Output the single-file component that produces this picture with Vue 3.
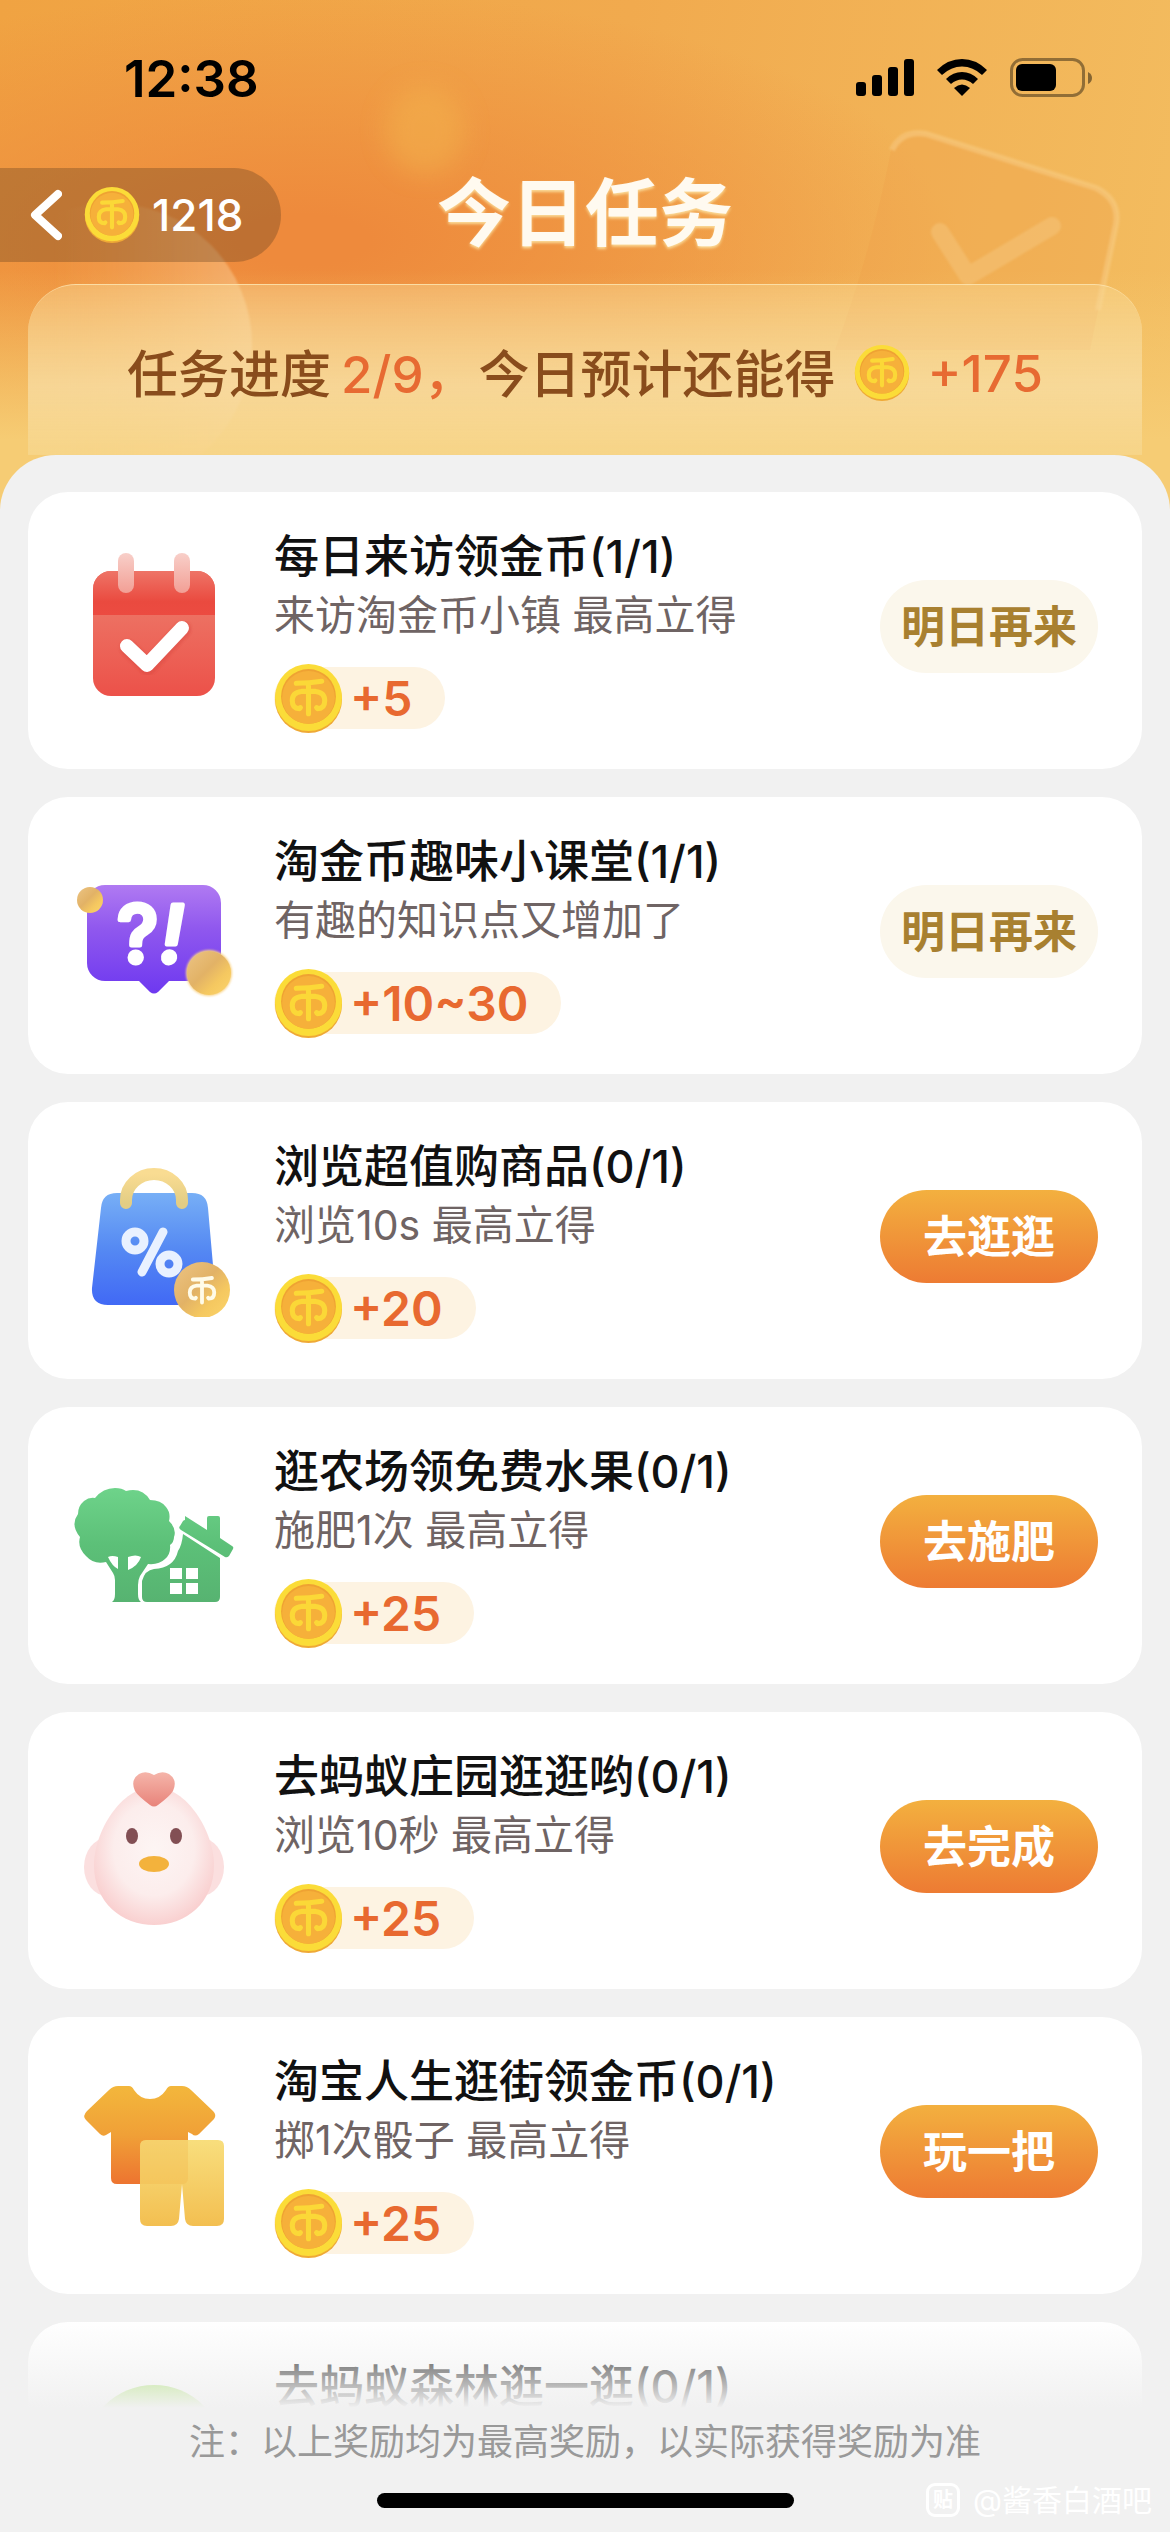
<script setup>
import { ref } from 'vue'

const balance = ref(1218)
const done = ref(2)
const total = ref(9)
const remain = ref(175)

const tasks = ref([
  { icon: 'calendar', title: '每日来访领金币(1/1)', desc: '来访淘金币小镇 最高立得', reward: '+5', action: '明日再来', finished: true },
  { icon: 'quiz', title: '淘金币趣味小课堂(1/1)', desc: '有趣的知识点又增加了', reward: '+10~30', action: '明日再来', finished: true },
  { icon: 'bag', title: '浏览超值购商品(0/1)', desc: '浏览10s 最高立得', reward: '+20', action: '去逛逛' },
  { icon: 'farm', title: '逛农场领免费水果(0/1)', desc: '施肥1次 最高立得', reward: '+25', action: '去施肥' },
  { icon: 'chick', title: '去蚂蚁庄园逛逛哟(0/1)', desc: '浏览10秒 最高立得', reward: '+25', action: '去完成' },
  { icon: 'clothes', title: '淘宝人生逛街领金币(0/1)', desc: '掷1次骰子 最高立得', reward: '+25', action: '玩一把' },
  { icon: 'forest', title: '去蚂蚁森林逛一逛(0/1)' }
])
</script>

<template>
  <div class="page">
    <!-- shared shapes and gradients -->
    <svg class="defs" aria-hidden="true">
      <defs>
        <symbol id="emblem" viewBox="0 0 68 68">
          <g fill="none" stroke-width="5" stroke-linecap="round" stroke-linejoin="round">
            <path d="M22 19q13 0 25-2M34 19v30" />
            <path d="M34 27h-7q-9 1-9 9 0 8 7 8l1-1M34 27h7q9 1 9 9 0 8-7 8l-1-1" />
          </g>
        </symbol>
        <symbol id="coin" viewBox="0 0 68 68">
          <circle cx="34" cy="35" r="33" fill="#efa936" />
          <circle cx="34" cy="33" r="33" fill="#fbdc38" />
          <circle cx="34" cy="32" r="27" fill="#efa233" />
          <circle cx="34" cy="33" r="26" fill="#f6b03a" />
          <use href="#emblem" stroke="#fbd837" width="68" height="68" />
        </symbol>
        <linearGradient id="redTop" x1="0" y1="0" x2="0" y2="1">
          <stop offset="0" stop-color="#ee7467" />
          <stop offset="0.700" stop-color="#ea4a3f" />
          <stop offset="1" stop-color="#ec4b41" />
        </linearGradient>
        <linearGradient id="redBody" x1="0" y1="0" x2="0" y2="1">
          <stop offset="0.300" stop-color="#ed7364" />
          <stop offset="1" stop-color="#ec5149" />
        </linearGradient>
        <linearGradient id="ring" x1="0" y1="0" x2="0" y2="1">
          <stop offset="0" stop-color="#f8cfc9" />
          <stop offset="1" stop-color="#f29f95" />
        </linearGradient>
        <linearGradient id="purple" x1="0" y1="0" x2="0" y2="1">
          <stop offset="0" stop-color="#b07af2" />
          <stop offset="0.400" stop-color="#9058ee" />
          <stop offset="1" stop-color="#6e38f0" />
        </linearGradient>
        <linearGradient id="amber" x1="0" y1="0" x2="1" y2="1">
          <stop offset="0" stop-color="#ecc484" />
          <stop offset="0.450" stop-color="#e2b266" />
          <stop offset="0.700" stop-color="#f5c860" />
          <stop offset="1" stop-color="#fbd46c" />
        </linearGradient>
        <linearGradient id="blue" x1="0" y1="0" x2="0" y2="1">
          <stop offset="0" stop-color="#77aff6" />
          <stop offset="0.500" stop-color="#5589f3" />
          <stop offset="1" stop-color="#4169f5" />
        </linearGradient>
        <linearGradient id="handle" x1="0" y1="0" x2="0" y2="1">
          <stop offset="0" stop-color="#f9dc92" />
          <stop offset="1" stop-color="#e3cd84" />
        </linearGradient>
        <linearGradient id="green" x1="0" y1="26" x2="0" y2="140" gradientUnits="userSpaceOnUse">
          <stop offset="0" stop-color="#6ed38a" />
          <stop offset="0.500" stop-color="#5cc078" />
          <stop offset="1" stop-color="#57b371" />
        </linearGradient>
        <radialGradient id="pink" cx="0.500" cy="0.450" r="0.560">
          <stop offset="0" stop-color="#fdf5f4" />
          <stop offset="0.600" stop-color="#fcedec" />
          <stop offset="1" stop-color="#f9cfcf" />
        </radialGradient>
        <linearGradient id="heart" x1="0" y1="0" x2="0" y2="1">
          <stop offset="0" stop-color="#f5b5aa" />
          <stop offset="1" stop-color="#e8837a" />
        </linearGradient>
        <linearGradient id="shirt" x1="0" y1="0" x2="0" y2="1">
          <stop offset="0" stop-color="#f3b73c" />
          <stop offset="0.500" stop-color="#f0a037" />
          <stop offset="1" stop-color="#ed7430" />
        </linearGradient>
        <linearGradient id="shorts" x1="0" y1="0" x2="0" y2="1">
          <stop offset="0" stop-color="#f8de7d" />
          <stop offset="1" stop-color="#f3bf51" />
        </linearGradient>
        <linearGradient id="disc" x1="0" y1="0" x2="1" y2="0">
          <stop offset="0.300" stop-color="#f8c878" stop-opacity="0" />
          <stop offset="1" stop-color="#fbd3a0" stop-opacity="0.500" />
        </linearGradient>
        <linearGradient id="leaf" x1="0" y1="0" x2="0" y2="1">
          <stop offset="0" stop-color="#8fdc3c" />
          <stop offset="1" stop-color="#c6ec6a" />
        </linearGradient>
        <filter id="soft" x="-50%" y="-50%" width="200%" height="200%">
          <feGaussianBlur stdDeviation="12" />
        </filter>
        <filter id="glow" x="-20%" y="-20%" width="140%" height="140%">
          <feGaussianBlur stdDeviation="1" />
        </filter>
      </defs>
    </svg>

    <svg class="art" viewBox="0 0 1170 455" aria-hidden="true">
      <ellipse cx="425" cy="130" rx="40" ry="44" fill="#f3b44e" opacity="0.500" filter="url(#soft)" />
      <circle cx="110" cy="345" r="142" fill="url(#disc)" filter="url(#glow)" />
      <path d="M892 146Q902 128 926 134L1096 188Q1120 200 1116 224L1090 350H835Q872 250 892 146Z" fill="#f0a04a" fill-opacity="0.300" />
      <path d="M892 150Q902 130 926 134L1096 188Q1120 200 1116 224L1098 310" fill="none" stroke="#f9cf8a" stroke-opacity="0.500" stroke-width="6" filter="url(#glow)" />
      <path d="M940 232l28 44 84-50" fill="none" stroke="#f6c67c" stroke-opacity="0.500" stroke-width="18" stroke-linecap="round" stroke-linejoin="round" filter="url(#glow)" />
    </svg>

    <header class="header">
      <div class="status">
        <span class="time">12:38</span>
        <div class="signals">
          <svg width="58" height="38" viewBox="0 0 58 38" aria-label="信号">
            <rect x="0" y="23" width="10" height="14" rx="3" />
            <rect x="16" y="16" width="10" height="21" rx="3" />
            <rect x="32" y="8" width="10" height="29" rx="3" />
            <rect x="48" y="0" width="10" height="37" rx="3" />
          </svg>
          <svg width="50" height="38" viewBox="0 0 50 38" aria-label="无线网络">
            <path d="M0 11Q11 0 25 0T50 11L45 16Q36 7.500 25 7.500T5 16Z" />
            <path d="M9 20Q16 13 25 13T41 20L36 25Q31 20.500 25 20.500T14 25Z" />
            <path d="M17 29Q21 25.500 25 25.500T33 29L25 37Z" />
          </svg>
          <svg width="82" height="40" viewBox="0 0 82 40" aria-label="电量">
            <rect x="1.500" y="1.500" width="72" height="36" rx="11" fill="none" stroke="#000" stroke-opacity="0.400" stroke-width="3" />
            <rect x="6" y="6" width="40" height="27" rx="6" />
            <path d="M78 14q4 2 4 6t-4 6z" opacity="0.450" />
          </svg>
        </div>
      </div>

      <nav class="nav">
        <button class="back" type="button" aria-label="返回">
          <svg class="arrow" width="32" height="52" viewBox="0 0 32 52">
            <path d="M28 5L5 26l23 21" fill="none" stroke="#fff" stroke-width="8" stroke-linecap="round" stroke-linejoin="round" />
          </svg>
          <svg class="coin-md"><use href="#coin" /></svg>
          <span>{{ balance }}</span>
        </button>
        <h1 class="title">今日任务</h1>
      </nav>

      <div class="progress">
        <span>任务进度<em class="count">{{ done }}/{{ total }}，</em>今日预计还能得</span>
        <svg class="coin-md"><use href="#coin" /></svg>
        <em>+{{ remain }}</em>
      </div>
    </header>

    <main class="sheet">
      <ul class="list">
        <li v-for="task in tasks" :key="task.title" class="card">
          <svg class="icon" viewBox="0 0 160 160" aria-hidden="true">
            <g v-if="task.icon === 'calendar'">
              <rect x="19" y="24" width="122" height="125" rx="18" fill="url(#redBody)" />
              <path d="M19 68V42a18 18 0 0 1 18-18h86a18 18 0 0 1 18 18v26z" fill="url(#redTop)" />
              <rect x="44" y="6" width="16" height="40" rx="8" fill="url(#ring)" />
              <rect x="100" y="6" width="16" height="40" rx="8" fill="url(#ring)" />
              <path d="M54 101l20 19 35-38" fill="none" stroke="#d8453c" stroke-opacity="0.400" stroke-width="17" stroke-linecap="round" stroke-linejoin="round" filter="url(#glow)" />
              <path d="M53 99l20 19 35-37" fill="none" stroke="#fff" stroke-width="14" stroke-linecap="round" stroke-linejoin="round" />
            </g>
            <g v-else-if="task.icon === 'quiz'">
              <path d="M31 33h98a18 18 0 0 1 18 18v60a18 18 0 0 1-18 18H95l-11 11q-4 3-8 0l-11-11H31a18 18 0 0 1-18-18V51a18 18 0 0 1 18-18z" fill="url(#purple)" />
              <text class="quiz-mark" x="43" y="110">?<tspan class="slant" x="86">!</tspan></text>
              <circle cx="16" cy="48" r="13" fill="url(#amber)" />
              <circle cx="135" cy="121" r="23" fill="#f9d48a" filter="url(#glow)" />
              <circle cx="135" cy="121" r="22" fill="url(#amber)" />
            </g>
            <g v-else-if="task.icon === 'bag'">
              <path d="M43 36h75q15 0 16 15l7 80q1 17-16 17H34q-17 0-16-17l9-80q1-15 16-15z" fill="url(#blue)" />
              <path d="M52 46V43a28 26 0 0 1 56 0v3" fill="none" stroke="url(#handle)" stroke-width="12" stroke-linecap="round" />
              <g fill="none" stroke="#e9f1ff" stroke-width="9" stroke-linecap="round">
                <circle cx="61" cy="84" r="9" />
                <circle cx="95" cy="107" r="9" />
                <path d="M89 75L68 115" />
              </g>
              <circle cx="128" cy="133" r="28" fill="url(#amber)" />
              <use href="#emblem" x="102" y="108" width="52" height="52" stroke="#fffbe8" />
            </g>
            <g v-else-if="task.icon === 'farm'" fill="url(#green)">
              <path d="M38 140q3-2 3-8v-14q0-4-2-7l-7-11q-12 3-20-6-9-9-6-19-10-12-2-23 0-8 6-13 5-4 11-3 8-10 20-10 7 0 11 3 16-4 24 9 11 0 16 7 5 6 3 14 8 8 5 16 0 5-4 8 1 9-5 14-6 6-17 5l-8 12q-2 4-2 9v9q0 6 3 8z" />
              <path d="M34 95q4-2 10 0v12q-6-3-10-12zM54 95q8-3 13 0-3 9-13 13z" fill="#fff" />
              <path d="M109 72l37 24v39q0 5-5 5H73q-5 0-5-5v-16q3-11 12-12 20-1 24-18 4-6 5-17z" />
              <path d="M111 54l22 14V56q0-2 2-2h9q2 0 2 2v20l12 8q2 1 1 3l-4 7q-2 2-4 1l-44-27q-3-2-1-4l3-5q1-1 2-1z" />
              <path d="M96 106h12v11H96zM112 106h12v11h-12zM96 121h12v11H96zM112 121h12v11h-12z" fill="#fff" />
            </g>
            <g v-else-if="task.icon === 'chick'">
              <ellipse cx="33" cy="100" rx="23" ry="29" fill="#fbdfdf" />
              <ellipse cx="127" cy="100" rx="23" ry="29" fill="#fbdfdf" />
              <path d="M80 20c34 0 60 46 60 78 0 38-28 60-60 60s-60-22-60-60c0-32 26-78 60-78z" fill="url(#pink)" />
              <path d="M80 8q8-5 15-1 9 6 4 17-3 5-15 14-4 3-8 0-12-9-15-14-5-11 4-17 7-4 15 1z" fill="url(#heart)" />
              <ellipse cx="58" cy="69" rx="6" ry="8" fill="#824f54" />
              <ellipse cx="102" cy="69" rx="6" ry="8" fill="#824f54" />
              <ellipse cx="80" cy="97" rx="15" ry="8" fill="#f3b23c" />
            </g>
            <g v-else-if="task.icon === 'clothes'">
              <path d="M44 14h11q3 0 5 4 6 9 16 9t16-9q2-4 5-4h11q5 0 9 4l22 21q4 4 1 8l-15 15q-4 3-7 0l-4-2v46q0 6-6 6H43q-6 0-6-6V60l-5 3q-3 2-6-1L12 48q-4-4 1-9l22-21q4-4 9-4z" fill="url(#shirt)" />
              <path d="M72 68h72q6 0 6 6v73q0 7-7 7h-24q-7 0-8-7l-3-35-3 35q-1 7-8 7H73q-7 0-7-7V74q0-6 6-6z" fill="url(#shorts)" />
              <path d="M66 74q0-6 6-6h42v38q0 6-6 6H66z" fill="#f1b347" opacity="0.300" />
            </g>
            <g v-else>
              <circle cx="80" cy="78" r="70" fill="url(#leaf)" />
              <path d="M66 30q14 2 12 20-14-4-12-20z" fill="#fff" />
            </g>
          </svg>

          <div class="info">
            <h2>{{ task.title }}</h2>
            <p v-if="task.desc">{{ task.desc }}</p>
            <div v-if="task.reward" class="reward">
              <svg class="coin-lg"><use href="#coin" /></svg>
              <span>{{ task.reward }}</span>
            </div>
          </div>

          <button v-if="task.action" class="btn" :class="{ 'btn-done': task.finished }" type="button">{{ task.action }}</button>
        </li>
      </ul>
    </main>

    <footer class="footer">
      <p>注：以上奖励均为最高奖励，以实际获得奖励为准</p>
      <div class="home-bar"></div>
      <div class="watermark">
        <span class="mark">贴</span>
        <span>@酱香白酒吧</span>
      </div>
    </footer>
  </div>
</template>

<style>
html,
body {
  background: #f1f1f1;
}
</style>

<style scoped>
.page {
  position: relative;
  display: flex;
  flex-direction: column;
  height: 100vh;
  overflow: hidden;
  font-family: Inter, "Noto Sans CJK SC", sans-serif;
  background:
    linear-gradient(to bottom, rgba(246, 204, 116, 0) 270px, #f6cc74 440px) top / 100% 540px no-repeat,
    radial-gradient(ellipse 56% 250px at 26% 240px, #ee8a3c 10%, rgba(238, 142, 62, 0) 100%) top / 100% 540px no-repeat,
    linear-gradient(100deg, #f0a342 0%, #f1aa4e 50%, #f3bd60 100%) top / 100% 540px no-repeat,
    #f1f1f1;
}

.defs {
  position: absolute;
  width: 0;
  height: 0;
}

.art {
  position: absolute;
  top: 0;
  left: 0;
  width: 100%;
}

.header {
  position: relative;
  flex: none;
}

.status {
  display: flex;
  justify-content: space-between;
  align-items: center;
  height: 60px;
  padding: 48px 78px 60px 124px;
}

.time {
  font-size: 51px;
  font-weight: 600;
}

.signals {
  display: flex;
  align-items: center;
  gap: 23px;
}

.nav {
  display: grid;
  grid-template-columns: 1fr auto 1fr;
  align-items: center;
  height: 94px;
}

.back {
  justify-self: start;
  display: flex;
  align-items: center;
  height: 94px;
  padding: 0 38px 0 30px;
  border: none;
  border-radius: 0 47px 47px 0;
  background: rgba(90, 60, 30, 0.32);
  color: #fff;
  font-family: inherit;
  font-size: 44px;
  font-weight: 500;
  cursor: pointer;
}

.arrow {
  margin-right: 22px;
}

.back .coin-md {
  margin-right: 12px;
}

.coin-md {
  flex: none;
  width: 56px;
  height: 56px;
}

.title {
  margin: 0;
  padding-bottom: 4px;
  font-size: 74px;
  font-weight: 700;
  line-height: 90px;
  color: #fffaf0;
  text-shadow: 0 2px 3px #fbdc9a;
}

.progress {
  display: flex;
  justify-content: center;
  align-items: center;
  gap: 18px;
  height: 60px;
  margin: 22px 28px 0;
  padding: 58px 0 52px;
  border-top: 1px solid rgba(255, 235, 190, 0.6);
  border-radius: 48px 48px 0 0;
  background: linear-gradient(to bottom, rgba(250, 222, 156, 0.4), rgba(248, 224, 170, 0.7) 60%, rgba(247, 214, 140, 0.8));
  color: #894c1c;
  font-size: 51px;
  font-weight: 500;
  white-space: nowrap;
}

.progress span {
  padding-bottom: 4px;
}

.progress em {
  color: #e76a32;
  font-style: normal;
}

.progress .count {
  margin: 0 4px 0 10px;
}

.sheet {
  position: relative;
  flex: 1;
  min-height: 0;
  overflow: hidden;
  border-radius: 56px 56px 0 0;
  background: #f1f1f1;
}

/* the list fades out above the footer */
.sheet::after {
  content: "";
  position: absolute;
  right: 0;
  bottom: 0;
  left: 0;
  height: 90px;
  background: linear-gradient(to bottom, rgba(241, 241, 241, 0), #f1f1f1);
  pointer-events: none;
}

.list {
  display: flex;
  flex-direction: column;
  gap: 28px;
  margin: 0;
  padding: 37px 28px;
  list-style: none;
}

.card {
  display: flex;
  align-items: center;
  min-height: 205px;
  padding: 32px 44px 40px 46px;
  border-radius: 40px;
  background: #fff;
}

.icon {
  flex: none;
  width: 160px;
  height: 160px;
  margin-right: 40px;
}

.quiz-mark {
  fill: #fff;
  stroke: #fff;
  stroke-width: 5px;
  stroke-linejoin: round;
  font-size: 78px;
  font-weight: 500;
}

.slant {
  font-style: italic;
}

.info {
  flex: 1;
  align-self: flex-start;
  min-width: 0;
}

.info h2 {
  margin: 0;
  color: #111;
  font-size: 45px;
  font-weight: 500;
  line-height: 66px;
  white-space: nowrap;
}

.info p {
  margin: 0 0 27px;
  color: #6f6464;
  font-size: 41px;
  line-height: 50px;
  white-space: nowrap;
}

.reward {
  display: flex;
  align-items: center;
  width: max-content;
  height: 62px;
  padding-right: 33px;
  border-radius: 31px;
  background: #fdf3e2;
  color: #e86930;
  font-size: 48px;
  font-weight: 600;
}

.coin-lg {
  flex: none;
  width: 69px;
  height: 69px;
  margin-right: 7px;
}

.btn {
  flex: none;
  width: 218px;
  height: 93px;
  padding: 0 0 6px;
  border: none;
  border-radius: 47px;
  background: linear-gradient(to bottom, #f3b03f, #ed7b33);
  color: #fff;
  font-family: inherit;
  font-size: 44px;
  font-weight: 600;
  cursor: pointer;
}

.btn-done {
  background: #fbf7ec;
  color: #a88030;
}

.footer {
  position: relative;
  display: flex;
  flex-direction: column;
  align-items: center;
  flex: none;
  padding-bottom: 24px;
  background: #f1f1f1;
}

.footer p {
  margin: 0 0 25px;
  padding-top: 8px;
  color: #999;
  font-size: 36px;
  line-height: 52px;
}

.home-bar {
  width: 417px;
  height: 15px;
  border-radius: 8px;
  background: #000;
}

.watermark {
  position: absolute;
  right: 18px;
  bottom: 10px;
  display: flex;
  align-items: center;
  gap: 13px;
  color: #fff;
  font-size: 30px;
  line-height: 44px;
}

.mark {
  width: 28px;
  height: 28px;
  border: 3px solid #fff;
  border-radius: 9px;
  font-size: 20px;
  font-weight: 700;
  line-height: 28px;
  text-align: center;
}
</style>
